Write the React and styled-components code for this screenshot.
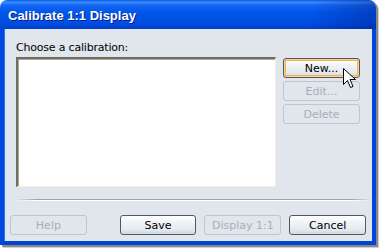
import React from "react";
import styled, { createGlobalStyle, css } from "styled-components";

const Global = createGlobalStyle`
  html, body { margin: 0; padding: 0; background: #ffffff; }
  body { width: 380px; height: 250px; overflow: hidden; }
`;

const Window = styled.div`
  position: relative;
  width: 376px;
  height: 245px;
  display: flex;
  flex-direction: column;
  border-radius: 7px 7px 0 0;
  box-shadow: 2px 2px 0 rgba(80, 80, 80, 0.55), 3px 3px 1px rgba(80, 80, 80, 0.3);
  font-family: "DejaVu Sans", Tahoma, sans-serif;
`;

const TitleBar = styled.div`
  height: 29px;
  flex: none;
  border-radius: 7px 7px 0 0;
  background:
    linear-gradient(90deg, rgba(0,0,0,0) 0%, rgba(0,0,0,0) 82%, rgba(0,20,120,0.35) 100%),
    linear-gradient(180deg, #0a5ee6 0%, #3b8cff 8%, #1466f2 18%, #0055ea 45%, #0050e4 75%, #0046d8 90%, #003ec8 100%);
  display: flex;
  align-items: center;
  padding-left: 8px;
  padding-top: 1px;
  box-sizing: border-box;
`;

const Title = styled.span`
  color: #ffffff;
  font-family: "Liberation Sans", Arial, sans-serif;
  font-weight: bold;
  font-size: 13px;
  text-shadow: 1px 1px 0 #0a1e7a;
`;

const Frame = styled.div`
  flex: 1;
  display: flex;
  flex-direction: column;
  background: #e0e6eb;
  border-left: 4px solid #0048dc;
  border-right: 4px solid #0048dc;
  border-bottom: 4px solid #0044d4;
  box-shadow: inset 1px 0 0 #2f6ff0;
`;

const Content = styled.div`
  flex: 1;
  display: flex;
  flex-direction: column;
  padding: 12px 6px 0 6px;
`;

const MainRow = styled.div`
  display: flex;
  padding-left: 6px;
`;

const LeftCol = styled.div`
  display: flex;
  flex-direction: column;
`;

const Label = styled.div`
  font-size: 11px;
  line-height: 13px;
  height: 13px;
  color: #000;
  margin-bottom: 3px;
  letter-spacing: -0.2px;
`;

const ListBox = styled.div`
  width: 260px;
  height: 130px;
  box-sizing: border-box;
  background: #ffffff;
  border-top: 2px solid #716f64;
  border-left: 2px solid #716f64;
  border-right: 1px solid #f1efe2;
  border-bottom: 1px solid #f1efe2;
  box-shadow: inset 1px 1px 0 #aca899;
`;

const SideButtons = styled.div`
  display: flex;
  flex-direction: column;
  gap: 3px;
  margin-left: 7px;
  margin-top: 17px;
`;

const Button = styled.div`
  width: 77px;
  height: 20px;
  box-sizing: border-box;
  border-radius: 3px;
  display: flex;
  align-items: center;
  justify-content: center;
  font-size: 11px;
  border: 1px solid #4d5a66;
  color: #000;
  background: linear-gradient(180deg, #ffffff 0%, #f2f5f8 30%, #e3e9ee 75%, #d1dae2 100%);
  ${(p) =>
    p.disabled &&
    css`
      border-color: #bcc6cf;
      color: #a6afb8;
      background: #e0e6eb;
    `}
  ${(p) =>
    p.focused &&
    css`
      box-shadow: inset 0 0 0 1px #fcd38b, inset 0 0 0 2px #f6b14a;
    `}
`;

const Separator = styled.div`
  height: 2px;
  margin: 12px 0 0 6px;
  width: 356px;
  background:
    linear-gradient(90deg, #e0e6eb 0%, rgba(224,230,235,0) 6%, rgba(224,230,235,0) 94%, #e0e6eb 100%),
    linear-gradient(180deg, #9aa4ad 0 1px, #ffffff 1px 2px);
`;

const BottomRow = styled.div`
  display: flex;
  gap: 8px;
  margin-top: 14px;
`;

const Spacer = styled.div`
  width: 17px;
`;

const Cursor = styled.svg`
  position: absolute;
  left: 342px;
  top: 67px;
`;

export default function App() {
  return (
    <>
      <Global />
      <Window>
        <TitleBar>
          <Title>Calibrate 1:1 Display</Title>
        </TitleBar>
        <Frame>
          <Content>
            <MainRow>
              <LeftCol>
                <Label>Choose a calibration:</Label>
                <ListBox />
              </LeftCol>
              <SideButtons>
                <Button focused>New...</Button>
                <Button disabled>Edit...</Button>
                <Button disabled>Delete</Button>
              </SideButtons>
            </MainRow>
            <Separator />
            <BottomRow>
              <Button disabled>Help</Button>
              <Spacer />
              <Button>Save</Button>
              <Button disabled>Display 1:1</Button>
              <Button>Cancel</Button>
            </BottomRow>
          </Content>
        </Frame>
        <Cursor width="18" height="24" viewBox="0 0 18 24">
          <path
            d="M1.5 1.5 L1.5 17.5 L5.5 13.5 L8.5 20.5 L11 19.5 L8 12.5 L13.5 12.5 Z"
            fill="#ffffff"
            stroke="#000000"
            strokeWidth="1"
            strokeLinejoin="miter"
          />
        </Cursor>
      </Window>
    </>
  );
}
